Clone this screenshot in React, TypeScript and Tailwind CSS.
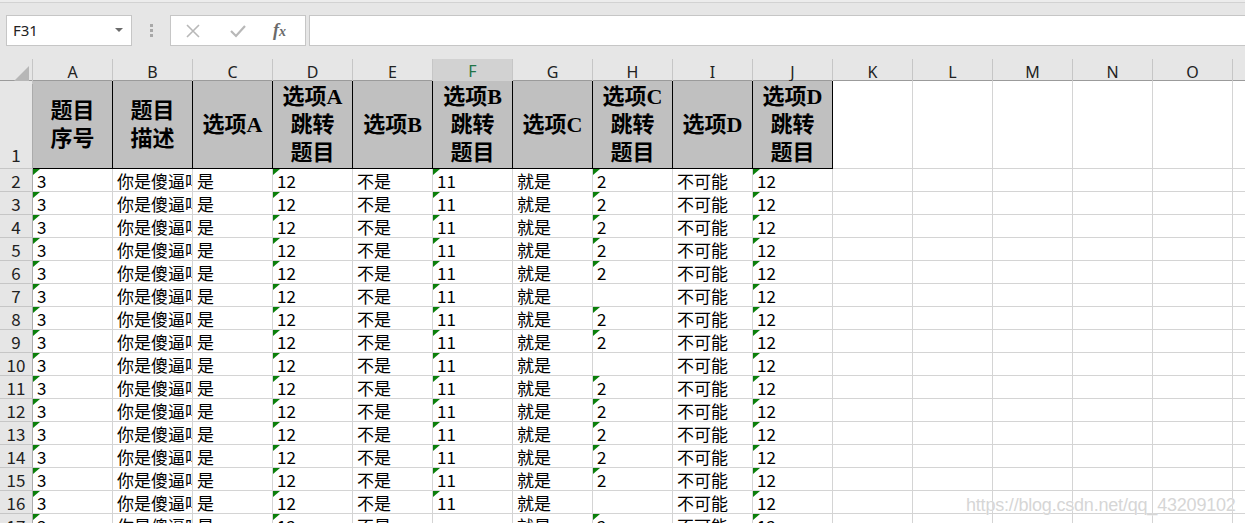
import React from 'react';

const COLS = ['A', 'B', 'C', 'D', 'E', 'F', 'G', 'H', 'I', 'J', 'K', 'L', 'M', 'N', 'O'];

const HEADER: string[][] = [
  ['题目', '序号'],
  ['题目', '描述'],
  ['选项A'],
  ['选项A', '跳转', '题目'],
  ['选项B'],
  ['选项B', '跳转', '题目'],
  ['选项C'],
  ['选项C', '跳转', '题目'],
  ['选项D'],
  ['选项D', '跳转', '题目'],
];

type Cell = { text: string; flag?: boolean };

// rows 2..17 of the sheet
const ROWS: Cell[][] = Array.from({ length: 16 }, (_, i) => {
  const n = i + 2;
  const noH = n === 7 || n === 10 || n === 16;
  const noF = n === 17;
  return [
    { text: '3', flag: true },
    { text: '你是傻逼吗' },
    { text: '是' },
    { text: '12', flag: true },
    { text: '不是' },
    noF ? { text: '' } : { text: '11', flag: true },
    { text: '就是' },
    noH ? { text: '' } : { text: '2', flag: true },
    { text: '不可能' },
    { text: '12', flag: true },
  ];
});

const dataFont = "font-['Liberation_Sans_Narrow','Noto_Sans_CJK_SC',sans-serif]";

function Flag() {
  return (
    <svg className="absolute left-0 top-0" width="7" height="6" viewBox="0 0 7 6">
      <polygon points="0,0 7,0 0,6" fill="#0a7f0a" />
    </svg>
  );
}

function FormulaBar() {
  return (
    <div className="h-[59px] bg-[#e6e6e6]">
      <div className="h-[2px] bg-[#ececec]" />
      <div className="flex items-start border-t border-[#d2d2d2] pt-[12px]">
        <div className="ml-[6px] flex h-[31px] w-[126px] items-center justify-between border border-[#c6c6c6] bg-white pl-[6px] pr-[8px]">
          <span className="font-['Noto_Sans',sans-serif] text-[15px] text-[#222]">F31</span>
          <svg width="8" height="5" viewBox="0 0 8 5">
            <polygon points="0,0 8,0 4,4" fill="#6b6b6b" />
          </svg>
        </div>
        <div className="flex h-[31px] w-[38px] flex-col items-center justify-center gap-[2px]">
          <span className="h-[3px] w-[3px] bg-[#a8a8a8]" />
          <span className="h-[3px] w-[3px] bg-[#a8a8a8]" />
          <span className="h-[3px] w-[3px] bg-[#a8a8a8]" />
        </div>
        <div className="flex h-[31px] w-[136px] items-center border border-[#c6c6c6] bg-white">
          <svg className="ml-[14px]" width="16" height="16" viewBox="0 0 16 16">
            <path d="M2 2 L14 14 M14 2 L2 14" stroke="#b8b8b8" strokeWidth="1.6" fill="none" />
          </svg>
          <svg className="ml-[28px]" width="18" height="16" viewBox="0 0 18 16">
            <path d="M2 8 L7 13 L16 3" stroke="#b8b8b8" strokeWidth="2.2" fill="none" />
          </svg>
          <span className="ml-[26px] font-['Liberation_Serif',serif] text-[18px] italic font-bold text-[#6a6a6a]">
            f<span className="text-[14px]">x</span>
          </span>
        </div>
        <div className="ml-[3px] h-[31px] flex-1 -mr-[4px] border border-[#c6c6c6] bg-white" />
      </div>
    </div>
  );
}

function ColumnHeader() {
  return (
    <div className="grid h-[22px] grid-cols-[33px_repeat(15,80px)_1fr] border-b border-[#9b9b9b] bg-[#e6e6e6] font-['Noto_Sans',sans-serif] text-[16px] text-[#222]">
      <div className="relative border-r border-[#c6c6c6]">
        <svg className="absolute bottom-[3px] right-[3px]" width="15" height="15" viewBox="0 0 15 15">
          <polygon points="15,0 15,15 0,15" fill="#b7b7b7" />
        </svg>
      </div>
      {COLS.map((c) =>
        c === 'F' ? (
          <div
            key={c}
            className="-mb-[1px] flex items-center justify-center border-r border-b-2 border-r-[#c6c6c6] border-b-[#217346] bg-[#d2d2d2] text-[#217346]"
          >
            {c}
          </div>
        ) : (
          <div key={c} className="flex items-center justify-center border-r border-[#c6c6c6]">
            {c}
          </div>
        ),
      )}
      <div />
    </div>
  );
}

function TitleRow() {
  return (
    <div className="grid h-[88px] grid-cols-[33px_repeat(15,80px)_1fr]">
      <div className={`flex items-end justify-center border-r border-b border-r-[#ababab] border-b-[#c6c6c6] bg-[#e6e6e6] pb-[1px] text-[17px] text-[#222] ${dataFont}`}>
        1
      </div>
      {HEADER.map((lines, i) => (
        <div
          key={i}
          className="flex flex-col items-center justify-center border-r border-b border-black bg-[#c0c0c0] font-['Liberation_Serif','Noto_Sans_CJK_SC',serif] text-[22px] font-bold leading-[28px] text-black"
        >
          {lines.map((l) => (
            <span key={l} className="whitespace-nowrap">
              {l}
            </span>
          ))}
        </div>
      ))}
      {COLS.slice(10).map((c) => (
        <div key={c} className="border-r border-b border-[#d4d4d4] bg-white" />
      ))}
      <div className="border-b border-[#d4d4d4] bg-white" />
    </div>
  );
}

function DataRow({ n, cells }: { n: number; cells: Cell[] }) {
  return (
    <div className={`grid h-[23px] grid-cols-[33px_repeat(15,80px)_1fr] text-[17px] leading-[21px] text-black ${dataFont}`}>
      <div className="flex items-center justify-center border-r border-b border-r-[#ababab] border-b-[#c6c6c6] bg-[#e6e6e6] text-[#222]">
        {n}
      </div>
      {cells.map((c, i) => (
        <div
          key={i}
          className="relative flex items-end overflow-hidden whitespace-nowrap border-r border-b border-[#d4d4d4] bg-white pl-[4px]"
        >
          {c.flag && <Flag />}
          {c.text}
        </div>
      ))}
      {COLS.slice(10).map((c) => (
        <div key={c} className="border-r border-b border-[#d4d4d4] bg-white" />
      ))}
      <div className="border-b border-[#d4d4d4] bg-white" />
    </div>
  );
}

export default function App() {
  return (
    <div className="relative h-[523px] w-[1245px] overflow-hidden bg-white">
      <FormulaBar />
      <ColumnHeader />
      <TitleRow />
      {ROWS.map((cells, i) => (
        <DataRow key={i} n={i + 2} cells={cells} />
      ))}
      <div className="pointer-events-none absolute left-[966px] top-[492px] font-['Liberation_Sans_Narrow','Liberation_Sans',sans-serif] text-[18px] tracking-[-0.2px] text-[#d6d6d6] [text-shadow:0_0_1px_#fff]">
        https://blog.csdn.net/qq_43209102
      </div>
    </div>
  );
}
